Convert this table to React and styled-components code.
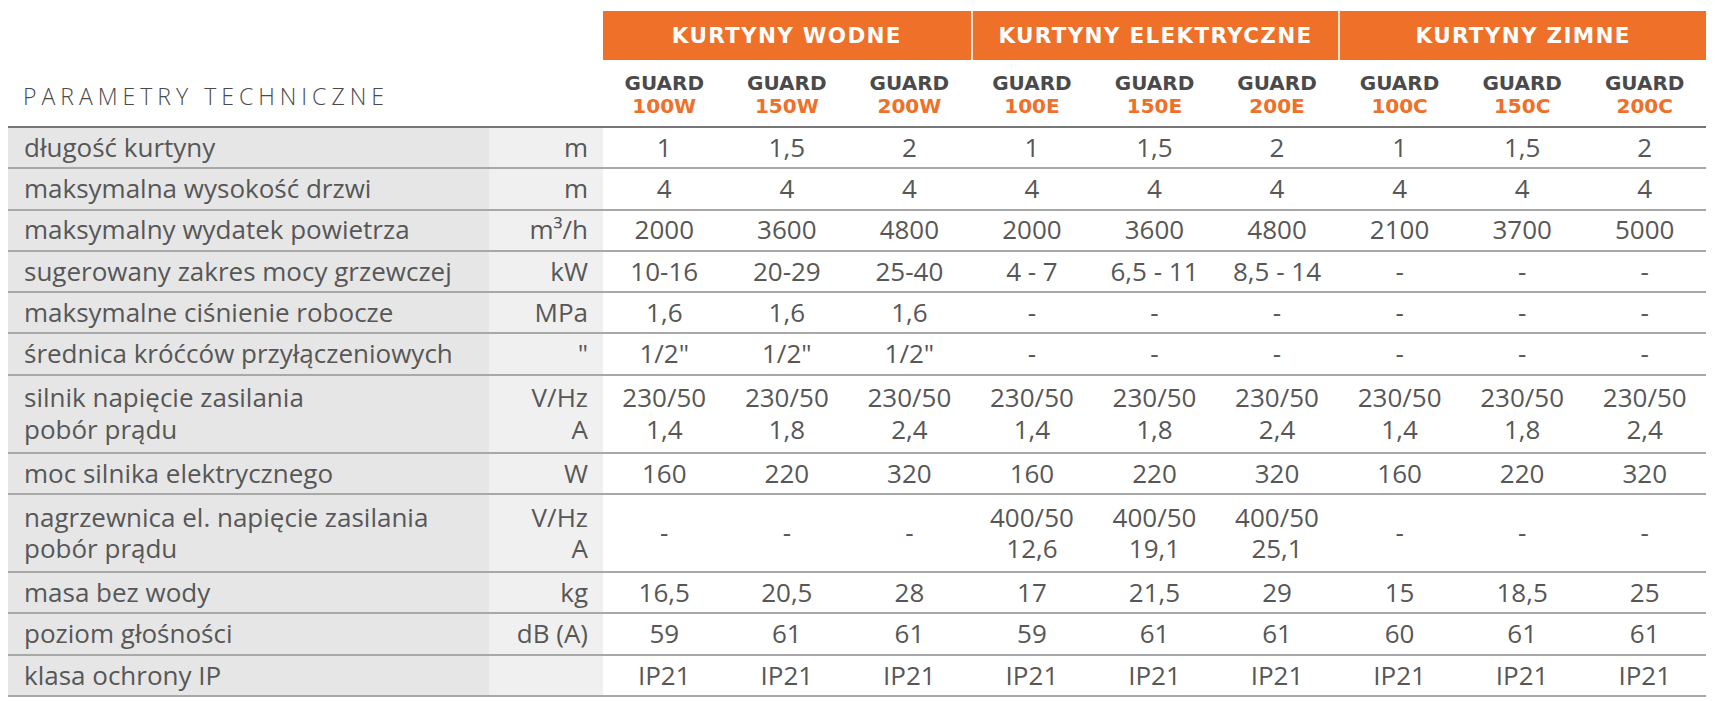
import React from 'react';
import styled, { createGlobalStyle } from 'styled-components';

const orange = '#ef7029';
const textGrey = '#575757';

const GlobalStyle = createGlobalStyle`
  html, body {
    margin: 0;
    padding: 0;
    background: #fff;
  }
  body {
    font-family: 'Open Sans', 'Liberation Sans', sans-serif;
    color: ${textGrey};
  }
`;

const Page = styled.div`
  padding: 11px 9px 0 8px;
  width: 1698px;
`;

const cols = '481px 114px repeat(9, 1fr)';

const GroupRow = styled.div`
  display: grid;
  grid-template-columns: ${cols};
  height: 49px;
`;

const GroupCell = styled.div`
  grid-column: span 3;
  background: ${orange};
  color: #fff;
  display: flex;
  align-items: center;
  justify-content: center;
  font-family: 'DejaVu Sans', sans-serif;
  font-weight: bold;
  font-size: 21.5px;
  letter-spacing: 1.3px;
  border-left: ${p => (p.first ? 'none' : '2px solid #fbe3d6')};
`;

const Spacer = styled.div`
  grid-column: span 2;
`;

const ModelRow = styled.div`
  display: grid;
  grid-template-columns: ${cols};
  height: 66px;
  border-bottom: 2px solid #767676;
`;

const Title = styled.div`
  grid-column: span 2;
  display: flex;
  align-items: center;
  padding-left: 15px;
  padding-top: 5px;
  font-size: 23px;
  font-weight: 300;
  letter-spacing: 5px;
  color: #4a4a4a;
`;

const Model = styled.div`
  display: flex;
  flex-direction: column;
  align-items: center;
  justify-content: center;
  padding-top: 4px;
  font-family: 'DejaVu Sans', sans-serif;
  font-weight: bold;
  font-size: 20px;
  line-height: 23px;
  color: #4a4a4c;
  span {
    color: ${orange};
  }
`;

const Row = styled.div`
  display: grid;
  grid-template-columns: ${cols};
  height: ${p => (p.tall ? 76 : 39.3)}px;
  border-bottom: 2px solid #a8a8a8;
  font-size: 26px;
  line-height: 31.5px;
`;

const Label = styled.div`
  background: #e6e6e6;
  padding-left: 16px;
  display: flex;
  flex-direction: column;
  justify-content: center;
`;

const Unit = styled.div`
  background: #f0f0f0;
  padding-right: 15px;
  display: flex;
  flex-direction: column;
  justify-content: center;
  align-items: flex-end;
`;

const Value = styled.div`
  display: flex;
  flex-direction: column;
  justify-content: center;
  align-items: center;
`;

const groups = ['KURTYNY WODNE', 'KURTYNY ELEKTRYCZNE', 'KURTYNY ZIMNE'];
const models = ['100W', '150W', '200W', '100E', '150E', '200E', '100C', '150C', '200C'];

const rows = [
  { label: ['długość kurtyny'], unit: ['m'], values: ['1', '1,5', '2', '1', '1,5', '2', '1', '1,5', '2'] },
  { label: ['maksymalna wysokość drzwi'], unit: ['m'], values: ['4', '4', '4', '4', '4', '4', '4', '4', '4'] },
  { label: ['maksymalny wydatek powietrza'], unit: ['m³/h'], values: ['2000', '3600', '4800', '2000', '3600', '4800', '2100', '3700', '5000'] },
  { label: ['sugerowany zakres mocy grzewczej'], unit: ['kW'], values: ['10-16', '20-29', '25-40', '4 - 7', '6,5 - 11', '8,5 - 14', '-', '-', '-'] },
  { label: ['maksymalne ciśnienie robocze'], unit: ['MPa'], values: ['1,6', '1,6', '1,6', '-', '-', '-', '-', '-', '-'] },
  { label: ['średnica króćców przyłączeniowych'], unit: ['"'], values: ['1/2"', '1/2"', '1/2"', '-', '-', '-', '-', '-', '-'] },
  {
    label: ['silnik napięcie zasilania', 'pobór prądu'],
    unit: ['V/Hz', 'A'],
    tall: true,
    values: [
      ['230/50', '1,4'], ['230/50', '1,8'], ['230/50', '2,4'],
      ['230/50', '1,4'], ['230/50', '1,8'], ['230/50', '2,4'],
      ['230/50', '1,4'], ['230/50', '1,8'], ['230/50', '2,4'],
    ],
  },
  { label: ['moc silnika elektrycznego'], unit: ['W'], values: ['160', '220', '320', '160', '220', '320', '160', '220', '320'] },
  {
    label: ['nagrzewnica el. napięcie zasilania', 'pobór prądu'],
    unit: ['V/Hz', 'A'],
    tall: true,
    values: ['-', '-', '-', ['400/50', '12,6'], ['400/50', '19,1'], ['400/50', '25,1'], '-', '-', '-'],
  },
  { label: ['masa bez wody'], unit: ['kg'], values: ['16,5', '20,5', '28', '17', '21,5', '29', '15', '18,5', '25'] },
  { label: ['poziom głośności'], unit: ['dB (A)'], values: ['59', '61', '61', '59', '61', '61', '60', '61', '61'] },
  { label: ['klasa ochrony IP'], unit: [''], values: ['IP21', 'IP21', 'IP21', 'IP21', 'IP21', 'IP21', 'IP21', 'IP21', 'IP21'] },
];

const lines = v => (Array.isArray(v) ? v : [v]).map((t, i) => <div key={i}>{t}</div>);

export default function App() {
  return (
    <Page>
      <GlobalStyle />
      <GroupRow>
        <Spacer />
        {groups.map((g, i) => (
          <GroupCell key={g} first={i === 0}>{g}</GroupCell>
        ))}
      </GroupRow>
      <ModelRow>
        <Title>PARAMETRY TECHNICZNE</Title>
        {models.map(m => (
          <Model key={m}>
            GUARD
            <span>{m}</span>
          </Model>
        ))}
      </ModelRow>
      {rows.map((r, i) => (
        <Row key={i} tall={r.tall}>
          <Label>{lines(r.label)}</Label>
          <Unit>{lines(r.unit)}</Unit>
          {r.values.map((v, j) => (
            <Value key={j}>{lines(v)}</Value>
          ))}
        </Row>
      ))}
    </Page>
  );
}
